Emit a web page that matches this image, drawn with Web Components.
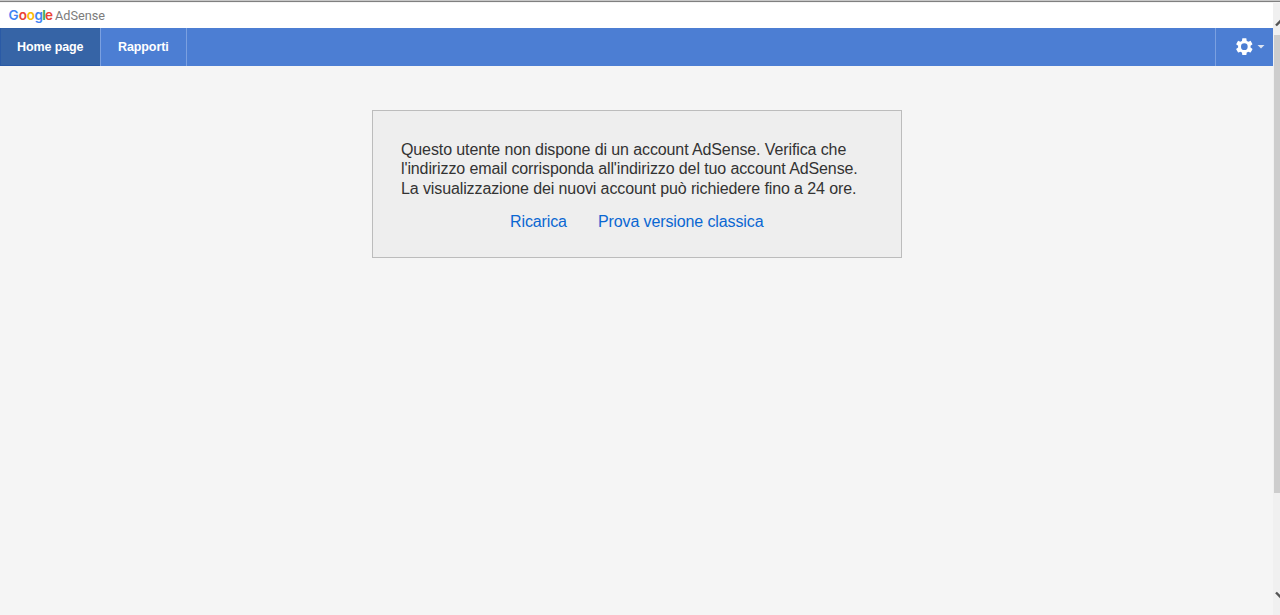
<!DOCTYPE html>
<html lang="it">
<head>
<meta charset="utf-8">
<title>Google AdSense</title>
<style>
    html, body {
        margin: 0;
        height: 100%;
        overflow: hidden;
        background: #f5f5f5;
        font-family: "Liberation Sans", Arial, sans-serif;
    }
</style>
</head>
<body>
<adsense-shell>
    <adsense-logo slot="logo"></adsense-logo>
    <nav-tab slot="tabs" active>Home page</nav-tab>
    <nav-tab slot="tabs">Rapporti</nav-tab>
    <settings-button slot="settings"></settings-button>
    <message-card>
        <div>Questo utente non dispone di un account AdSense. Verifica che</div>
        <div>l'indirizzo email corrisponda all'indirizzo del tuo account AdSense.</div>
        <div>La visualizzazione dei nuovi account può richiedere fino a 24 ore.</div>
        <action-link slot="actions">Ricarica</action-link>
        <action-link slot="actions">Prova versione classica</action-link>
    </message-card>
    <page-scrollbar slot="scrollbar"></page-scrollbar>
</adsense-shell>

<script>
class AdsenseShell extends HTMLElement {
    constructor() {
        super();
        this.attachShadow({ mode: 'open' });
    }

    connectedCallback() {
        this.shadowRoot.innerHTML = `
            <style>
                :host {
                    display: flex;
                    flex-direction: column;
                    height: 100vh;
                }
                .edge {
                    flex: none;
                    height: 1px;
                    background: #808080;
                    border-top: 1px solid #c8c8c8;
                    border-bottom: 1px solid #f4f4f4;
                }
                .body { flex: 1; display: flex; min-height: 0; }
                .page { flex: 1; display: flex; flex-direction: column; }
                header {
                    height: 25px;
                    flex: none;
                    display: flex;
                    background: #fff;
                }
                nav {
                    height: 38px;
                    flex: none;
                    display: flex;
                    justify-content: space-between;
                    background: #4c7ed3;
                }
                .tabs { display: flex; }
                main {
                    display: flex;
                    padding: 44px 0 0 372px;
                }
            </style>
            <div class="edge"></div>
            <div class="body">
                <div class="page">
                    <header><slot name="logo"></slot></header>
                    <nav>
                        <div class="tabs"><slot name="tabs"></slot></div>
                        <slot name="settings"></slot>
                    </nav>
                    <main><slot></slot></main>
                </div>
                <slot name="scrollbar"></slot>
            </div>
        `;
    }
}

class AdsenseLogo extends HTMLElement {
    constructor() {
        super();
        this.attachShadow({ mode: 'open' });
    }

    connectedCallback() {
        // each letter of the wordmark has its own start so the round letters keep their width
        this.shadowRoot.innerHTML = `
            <style>
                :host { display: block; padding-left: 8px; }
                svg { display: block; }
                .google { font: 600 13.5px Inter, sans-serif; }
                .product { font: 13.5px Roboto, sans-serif; fill: #7c7c7c; }
            </style>
            <svg width="100" height="25" viewBox="8 3 100 25">
                <text class="google" x="8.5 18.8 26.7 34.4 42.3 45" y="20"><tspan fill="#4285f4">G</tspan><tspan fill="#ea4335">o</tspan><tspan fill="#fbbc05">o</tspan><tspan fill="#4285f4">g</tspan><tspan fill="#34a853">l</tspan><tspan fill="#ea4335">e</tspan></text>
                <text class="product" x="55" y="20" textLength="50" lengthAdjust="spacingAndGlyphs">AdSense</text>
            </svg>
        `;
    }
}

class NavTab extends HTMLElement {
    constructor() {
        super();
        this.attachShadow({ mode: 'open' });
    }

    connectedCallback() {
        this.shadowRoot.innerHTML = `
            <style>
                :host {
                    display: block;
                    box-sizing: border-box;
                    width: 86px;
                    height: 38px;
                    padding-left: 17px;
                    border-right: 1px solid #7ba0e0;
                    color: #fff;
                    font-size: 12.5px;
                    font-weight: bold;
                    letter-spacing: -0.1px;
                    line-height: 39px;
                    white-space: nowrap;
                }
                :host([active]) {
                    width: 101px;
                    background: #3664a6;
                    box-shadow: inset 1px -1px 0 #2a5aa6, inset 0 1px 0 #3060a8;
                }
            </style>
            <slot></slot>
        `;
    }
}

class SettingsButton extends HTMLElement {
    constructor() {
        super();
        this.attachShadow({ mode: 'open' });
    }

    connectedCallback() {
        this.shadowRoot.innerHTML = `
            <style>
                :host {
                    display: flex;
                    box-sizing: border-box;
                    width: 58px;
                    height: 38px;
                    padding: 0 0 1px 18px;
                    border-left: 1px solid #7ba0e0;
                    align-items: center;
                    gap: 3px;
                }
                svg { display: block; flex: none; }
            </style>
            <svg width="20" height="20" viewBox="-0.4 0.4 24 24">
                <path fill="#fff" d="M19.43 12.98c.04-.32.07-.64.07-.98s-.03-.66-.07-.98l2.11-1.65c.19-.15.24-.42.12-.64l-2-3.46c-.12-.22-.39-.3-.61-.22l-2.49 1c-.52-.4-1.08-.73-1.69-.98l-.38-2.65C14.46 2.18 14.25 2 14 2h-4c-.25 0-.46.18-.49.42l-.38 2.65c-.61.25-1.17.59-1.69.98l-2.49-1c-.23-.09-.49 0-.61.22l-2 3.46c-.13.22-.07.49.12.64l2.11 1.65c-.04.32-.07.65-.07.98s.03.66.07.98l-2.11 1.65c-.19.15-.24.42-.12.64l2 3.46c.12.22.39.3.61.22l2.49-1c.52.4 1.08.73 1.69.98l.38 2.65c.03.24.24.42.49.42h4c.25 0 .46-.18.49-.42l.38-2.65c.61-.25 1.17-.59 1.69-.98l2.49 1c.23.09.49 0 .61-.22l2-3.46c.12-.22.07-.49-.12-.64l-2.11-1.65zM12 16a4 4 0 1 1 0-8 4 4 0 0 1 0 8z"/>
            </svg>
            <svg width="8" height="4" viewBox="0 0 8 4">
                <path fill="#dce4f2" d="M.5 0h7L4 3.5z"/>
            </svg>
        `;
    }
}

class MessageCard extends HTMLElement {
    constructor() {
        super();
        this.attachShadow({ mode: 'open' });
    }

    connectedCallback() {
        this.shadowRoot.innerHTML = `
            <style>
                :host {
                    display: block;
                    box-sizing: border-box;
                    width: 530px;
                    height: 148px;
                    padding: 28.5px 0 0 28px;
                    background: #eee;
                    border: 1px solid #bcbcbc;
                    color: #333;
                    font-size: 16px;
                    letter-spacing: -0.11px;
                    line-height: 19.5px;
                    white-space: nowrap;
                }
                .actions {
                    display: flex;
                    gap: 31px;
                    padding: 14px 0 0 109px;
                }
            </style>
            <slot></slot>
            <div class="actions"><slot name="actions"></slot></div>
        `;
    }
}

class ActionLink extends HTMLElement {
    constructor() {
        super();
        this.attachShadow({ mode: 'open' });
    }

    connectedCallback() {
        this.shadowRoot.innerHTML = `
            <style>
                :host { display: block; color: #0a67d2; cursor: pointer; }
            </style>
            <slot></slot>
        `;
    }
}

class PageScrollbar extends HTMLElement {
    constructor() {
        super();
        this.attachShadow({ mode: 'open' });
    }

    connectedCallback() {
        this.shadowRoot.innerHTML = `
            <style>
                :host {
                    display: flex;
                    flex-direction: column;
                    width: 7px;
                    background: #f0f0f0;
                }
                svg { display: block; flex: none; }
                .thumb { height: 458px; margin-left: 1px; background: #cdcdcd; }
                .track { flex: 1; }
            </style>
            <svg width="7" height="32" viewBox="0 0 7 32">
                <path d="M3 22.5L9 16.5" fill="none" stroke="#555" stroke-width="2.4"/>
            </svg>
            <div class="thumb"></div>
            <div class="track"></div>
            <svg width="7" height="24" viewBox="0 0 7 24">
                <path d="M3 1.5L9 7.5" fill="none" stroke="#555" stroke-width="2.4"/>
            </svg>
        `;
    }
}

customElements.define('adsense-shell', AdsenseShell);
customElements.define('adsense-logo', AdsenseLogo);
customElements.define('nav-tab', NavTab);
customElements.define('settings-button', SettingsButton);
customElements.define('message-card', MessageCard);
customElements.define('action-link', ActionLink);
customElements.define('page-scrollbar', PageScrollbar);
</script>
</body>
</html>
